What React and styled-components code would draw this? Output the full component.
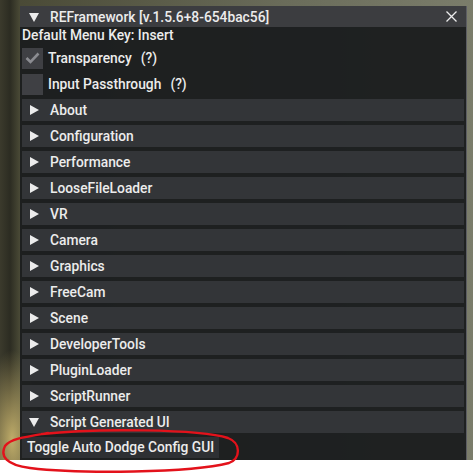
import React from 'react';
import styled, { createGlobalStyle } from 'styled-components';

const GlobalStyle = createGlobalStyle`
  html, body {
    margin: 0;
    padding: 0;
    background: #ffffff;
  }
  * {
    box-sizing: border-box;
  }
`;

const Page = styled.div`
  position: relative;
  width: 473px;
  height: 476px;
  overflow: hidden;
  background: #ffffff;
  font-family: Roboto, "Noto Sans", sans-serif;
`;

const Backdrop = styled.div`
  width: 473px;
  height: 460px;
  padding: 6px 6px 0 20px;
  background:
    radial-gradient(ellipse 30px 90px at 12px 440px, rgba(200, 180, 110, 0.95), rgba(200, 180, 110, 0) 100%),
    linear-gradient(to right, #3b3a2c 0px, #2c2c22 10px, #4a4a36 20px, #6a6c5a 60%, #7b7d6b 100%);
`;

const Window = styled.div`
  display: flex;
  flex-direction: column;
  width: 447px;
  height: 454px;
  border-right: 1px solid #5c5d63;
  background: rgba(28, 30, 31, 0.97);
`;

const TitleBar = styled.div`
  display: flex;
  align-items: center;
  height: 21px;
  padding: 0 8px 0 9px;
  background: #3c3d40;
  color: #ececec;
  font-size: 13.8px;
  font-weight: 500;
`;

const TitleText = styled.span`
  flex: 1;
`;

const Close = styled.svg`
  width: 11px;
  height: 11px;
  margin-right: 1px;
`;

const Body = styled.div`
  display: flex;
  flex-direction: column;
  gap: 4px;
  padding: 0 0 0 2px;
  flex: 1;
`;

const Label = styled.div`
  height: 16px;
  line-height: 16px;
  color: #ececec;
  font-size: 13.8px;
  font-weight: 500;
`;

const CheckRow = styled.div`
  display: flex;
  align-items: center;
  height: 22px;
  color: #ececec;
  font-size: 13.8px;
  font-weight: 500;
`;

const Box = styled.div`
  display: flex;
  align-items: center;
  justify-content: center;
  width: 21px;
  height: 21px;
  margin-right: 5px;
  background: #3f4044;
`;

const Hint = styled.span`
  margin-left: 9px;
`;

const Header = styled.div`
  display: flex;
  align-items: center;
  height: 22px;
  margin-right: 2px;
  padding-left: 7px;
  background: #333538;
  color: #ececec;
  font-size: 13.8px;
  font-weight: 500;
`;

const Arrow = styled.svg`
  width: 10px;
  height: 10px;
  margin-right: 11px;
  flex: none;
`;

const Button = styled.div`
  align-self: flex-start;
  height: 21px;
  line-height: 21px;
  padding: 0 5px;
  background: #2e3033;
  color: #ececec;
  font-size: 13.8px;
  font-weight: 500;
`;

const Scribble = styled.svg`
  position: absolute;
  left: 0;
  top: 0;
  width: 473px;
  height: 476px;
  pointer-events: none;
`;

const TriRight = () => (
  <Arrow viewBox="0 0 10 10">
    <polygon points="1,0 10,5 1,10" fill="#ececec" />
  </Arrow>
);

const TriDown = () => (
  <Arrow viewBox="0 0 10 10">
    <polygon points="0,1 10,1 5,10" fill="#ececec" />
  </Arrow>
);

const sections = [
  'About',
  'Configuration',
  'Performance',
  'LooseFileLoader',
  'VR',
  'Camera',
  'Graphics',
  'FreeCam',
  'Scene',
  'DeveloperTools',
  'PluginLoader',
  'ScriptRunner',
];

export default function App() {
  return (
    <Page>
      <GlobalStyle />
      <Backdrop>
        <Window>
          <TitleBar>
            <TriDown />
            <TitleText>REFramework [v.1.5.6+8-654bac56]</TitleText>
            <Close viewBox="0 0 11 11">
              <path d="M0.5 0.5 L10.5 10.5 M10.5 0.5 L0.5 10.5" stroke="#ececec" strokeWidth="1.3" />
            </Close>
          </TitleBar>
          <Body>
            <Label>Default Menu Key: Insert</Label>
            <CheckRow>
              <Box>
                <svg width="15" height="12" viewBox="0 0 15 12">
                  <path d="M1.5 6 L5.5 10 L13.5 1.5" fill="none" stroke="#8b8c91" strokeWidth="2.6" />
                </svg>
              </Box>
              Transparency<Hint>(?)</Hint>
            </CheckRow>
            <CheckRow>
              <Box />
              Input Passthrough<Hint>(?)</Hint>
            </CheckRow>
            {sections.map((s) => (
              <Header key={s}>
                <TriRight />
                {s}
              </Header>
            ))}
            <Header>
              <TriDown />
              Script Generated UI
            </Header>
            <Button>Toggle Auto Dodge Config GUI</Button>
          </Body>
        </Window>
      </Backdrop>
      <Scribble viewBox="0 0 473 476">
        <path
          d="M42 434 C95 428 200 429 228 438 C241 443 241 458 229 463 C190 473 80 474 30 468 C6 465 0 456 5 446 C10 439 24 437 48 433"
          fill="none"
          stroke="#e3121b"
          strokeWidth="2.4"
          strokeLinecap="round"
        />
      </Scribble>
    </Page>
  );
}
